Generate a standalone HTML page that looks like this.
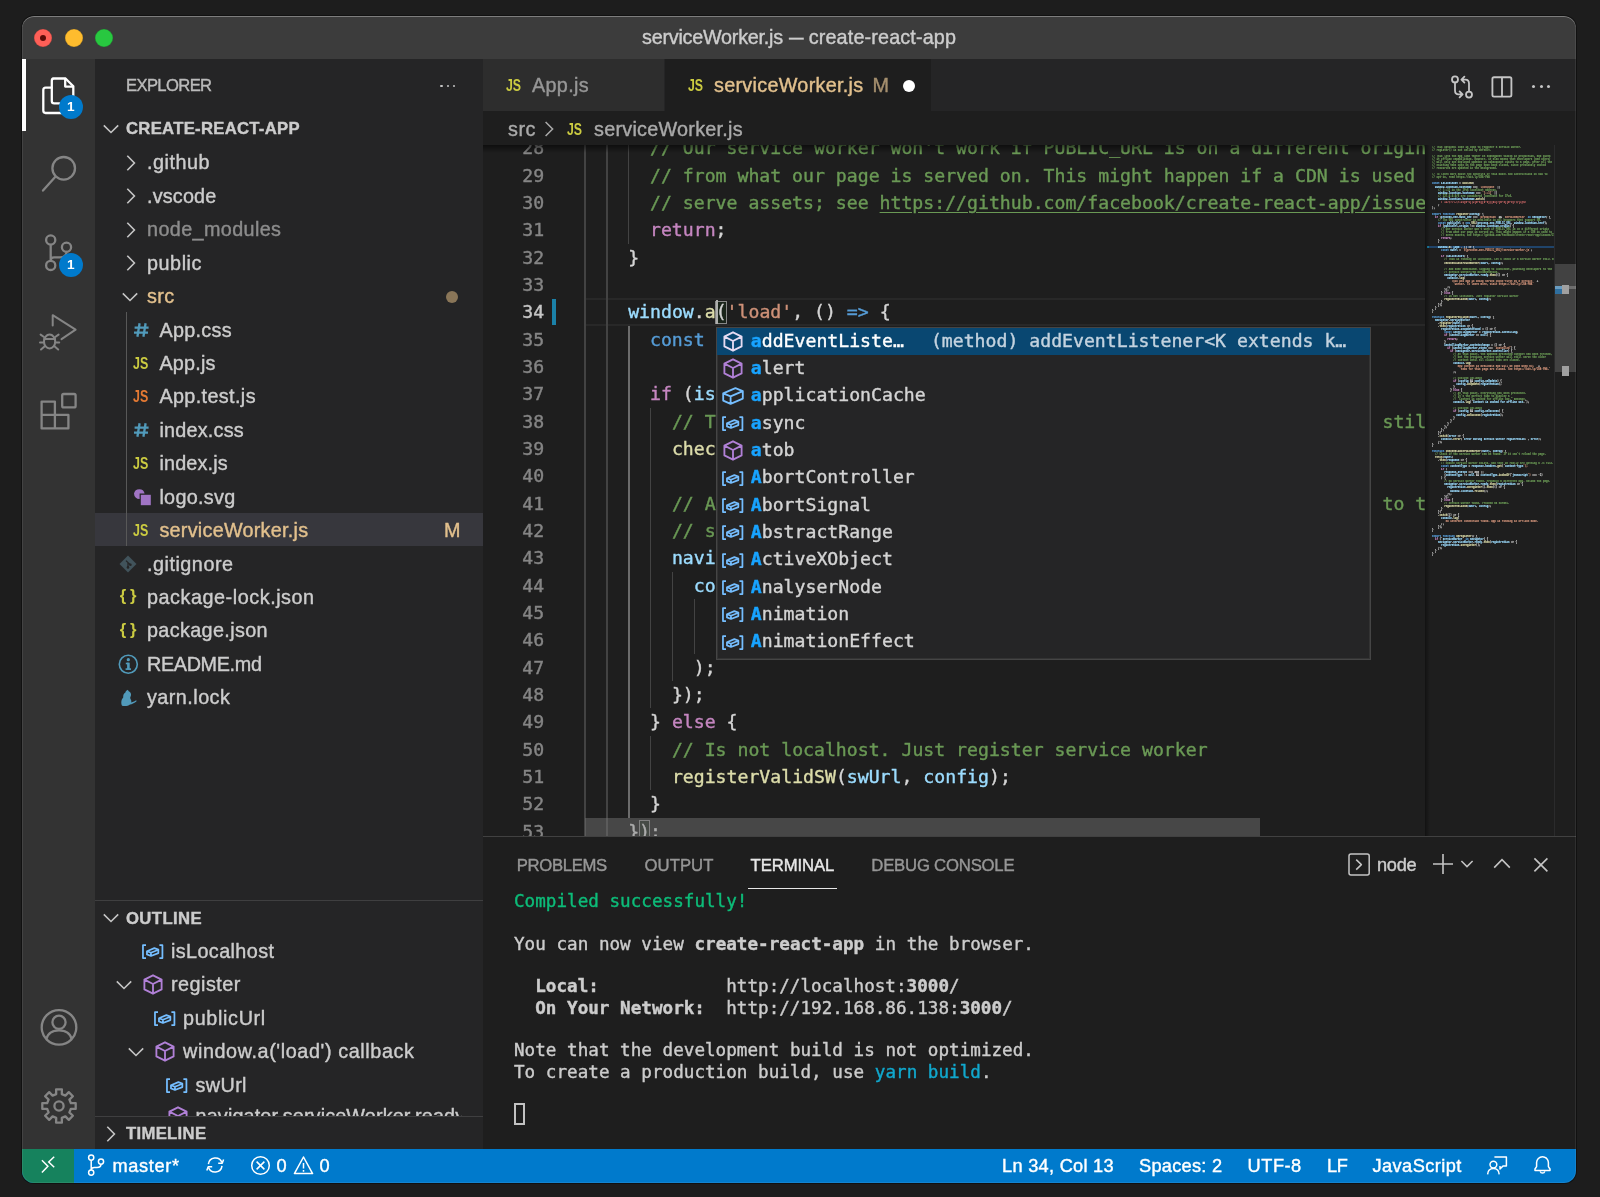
<!DOCTYPE html>
<html lang="en"><head><meta charset="utf-8"><title>serviceWorker.js — create-react-app</title>
<style>
html,body{margin:0;padding:0}
body{width:1600px;height:1197px;background:#1d1d1d;overflow:hidden;position:relative;font-family:"Liberation Sans",Arial,sans-serif;}
.win{position:absolute;left:22px;top:16px;width:1554px;height:1167px;border-radius:12px;overflow:hidden;will-change:transform;background:#1e1e1e;box-shadow:0 0 0 1px rgba(0,0,0,.4);}
.win:after{content:"";position:absolute;left:0;top:0;right:0;bottom:0;border-radius:12px;box-shadow:inset 0 1px 0 rgba(255,255,255,.28),inset 0 0 0 1px rgba(255,255,255,.08);pointer-events:none}
.t{position:absolute;white-space:pre;-webkit-text-stroke:0.4px currentColor;}
.r{position:absolute;}
.clip{position:absolute;overflow:hidden;}
svg{overflow:visible}
.c{color:#6a9955}.k{color:#c586c0}.b{color:#569cd6}.v{color:#9cdcfe}.f{color:#dcdcaa}.s{color:#ce9178}.p{color:#d4d4d4}
.u{text-decoration:underline;text-underline-offset:3px}
.mm{position:absolute;transform-origin:0 0;white-space:pre;font-family:"DejaVu Sans Mono","Liberation Mono",monospace;color:#d4d4d4;font-weight:700;-webkit-text-stroke:0.9px currentColor}
.mm div{position:absolute;left:0}.mm i{font-style:normal}.mm .x{color:#d16969}
.code{position:absolute;white-space:pre;-webkit-text-stroke:0.4px currentColor;font-family:"DejaVu Sans Mono","Liberation Mono",monospace;}
</style></head>
<body>
<div class="win">
<div class="r" style="left:0.0px;top:0.0px;width:1554.0px;height:42.7px;background:#3c3c3c;"></div>
<div class="r" style="left:0.0px;top:42.7px;width:73.0px;height:1090.3px;background:#333333;"></div>
<div class="r" style="left:73.0px;top:42.7px;width:388.0px;height:1090.3px;background:#252526;"></div>
<div class="r" style="left:461.0px;top:42.7px;width:1093.0px;height:52.8px;background:#252526;"></div>
<div class="r" style="left:461.0px;top:95.5px;width:1093.0px;height:1037.5px;background:#1e1e1e;"></div>
<div class="r" style="left:12.0px;top:12.5px;width:18.0px;height:18.0px;background:#fe5f57;border-radius:50%;box-shadow:inset 0 0 0 0.6px rgba(0,0,0,.18);"></div>
<div class="r" style="left:42.5px;top:12.5px;width:18.0px;height:18.0px;background:#febc2e;border-radius:50%;box-shadow:inset 0 0 0 0.6px rgba(0,0,0,.18);"></div>
<div class="r" style="left:73.0px;top:12.5px;width:18.0px;height:18.0px;background:#28c840;border-radius:50%;box-shadow:inset 0 0 0 0.6px rgba(0,0,0,.18);"></div>
<div class="r" style="left:18.0px;top:18.5px;width:6.0px;height:6.0px;background:#5a0c08;border-radius:50%;"></div>
<span class="t" style="left:620.0px;top:8.2px;font-size:19.80px;line-height:26px;color:#cccccc;letter-spacing:-0.242px;">serviceWorker.js</span>
<span class="t" style="left:766.6px;top:8.2px;font-size:19.80px;line-height:26px;color:#cccccc;transform:scaleX(.74);transform-origin:0 50%;">—</span>
<span class="t" style="left:786.7px;top:8.2px;font-size:19.80px;line-height:26px;color:#cccccc;letter-spacing:0.145px;">create-react-app</span>
<div class="r" style="left:0.0px;top:42.7px;width:4.1px;height:72.8px;background:#ffffff;"></div>
<svg class="r" style="left:14.0px;top:54.0px;" width="46.0" height="50.0" viewBox="0 0 46 50"><g fill="none" stroke="#ffffff" stroke-width="2.3" stroke-linejoin="round" stroke-linecap="round"><path d="M17 8.5 H29.5 L37.3 16.3 V31 Q37.3 33.4 35 33.4 H18.2 Q15.8 33.4 15.8 31 V10.7 Q15.8 8.5 18 8.5 Z"/><path d="M29.2 8.8 V16.6 H37"/><path d="M15.6 17.6 H9.6 Q7.3 17.6 7.3 20 V40.6 Q7.3 43 9.6 43 H26 Q28.3 43 28.3 40.6 V33.6"/></g></svg>
<svg class="r" style="left:14.0px;top:134.0px;" width="46.0" height="50.0" viewBox="0 0 46 50"><g fill="none" stroke="#858585" stroke-width="2.3" stroke-linecap="round"><circle cx="27.7" cy="18.3" r="11.3"/><path d="M19.6 26.6 L7 40.6"/></g></svg>
<svg class="r" style="left:14.0px;top:212.0px;" width="46.0" height="50.0" viewBox="0 0 46 50"><g fill="none" stroke="#858585" stroke-width="2.3" stroke-linecap="round"><circle cx="14.7" cy="12" r="4.6"/><circle cx="30.5" cy="19.2" r="4.6"/><circle cx="14.7" cy="37.4" r="4.6"/><path d="M14.7 16.8 V32.6 M30.5 24 Q30.5 29.3 24 29.3 H18 Q14.7 29.3 14.7 32.6"/></g></svg>
<svg class="r" style="left:14.0px;top:290.0px;" width="46.0" height="50.0" viewBox="0 0 46 50"><g fill="none" stroke="#858585" stroke-width="2.0" stroke-linecap="round" stroke-linejoin="round"><path d="M16.7 19.5 V9.2 L39.6 23.7 L25.5 33.2"/><ellipse cx="13.6" cy="35.5" rx="5.6" ry="7"/><path d="M8.3 33 H19 M8 31 L4.6 28.6 M19.2 31 L22.6 28.6 M8 36.5 H4 M19.2 36.5 H23.2 M8.5 40.5 L5 43.5 M18.7 40.5 L22.2 43.5"/></g></svg>
<svg class="r" style="left:14.0px;top:370.0px;" width="46.0" height="50.0" viewBox="0 0 46 50"><g fill="none" stroke="#858585" stroke-width="2.3" stroke-linejoin="round"><path d="M5.6 15.6 H18.9 V28.9 H32.4 V42.4 H5.6 Z M5.6 28.9 H18.9 V42.4"/><rect x="26.2" y="8" width="13.4" height="13.4" rx="1.5"/></g></svg>
<svg class="r" style="left:14.0px;top:988.0px;" width="46.0" height="48.0" viewBox="0 0 46 48"><g fill="none" stroke="#858585" stroke-width="2.3"><circle cx="23" cy="23.4" r="17.3"/><circle cx="23" cy="18.3" r="6.6"/><path d="M10.3 35.2 Q12.5 26.3 23 26.3 Q33.5 26.3 35.7 35.2"/></g></svg>
<svg class="r" style="left:14.0px;top:1066.0px;" width="46.0" height="48.0" viewBox="0 0 46 48"><g fill="none" stroke="#858585" stroke-width="2.3" stroke-linejoin="round"><path d="M20.1 7.3 L25.9 7.3 L25.8 12.1 L29.4 13.6 L32.8 10.1 L36.9 14.2 L33.4 17.6 L34.9 21.2 L39.7 21.1 L39.7 26.9 L34.9 26.8 L33.4 30.4 L36.9 33.8 L32.8 37.9 L29.4 34.4 L25.8 35.9 L25.9 40.7 L20.1 40.7 L20.2 35.9 L16.6 34.4 L13.2 37.9 L9.1 33.8 L12.6 30.4 L11.1 26.8 L6.3 26.9 L6.3 21.1 L11.1 21.2 L12.6 17.6 L9.1 14.2 L13.2 10.1 L16.6 13.6 L20.2 12.1 Z"/><circle cx="23" cy="24" r="4.6"/></g></svg>
<div class="r" style="left:36.8px;top:79.2px;width:24.0px;height:24.0px;background:#007acc;border-radius:50%;"></div>
<span class="t" style="left:45.0px;top:82.3px;font-size:13.60px;line-height:18px;color:#ffffff;font-weight:700;-webkit-text-stroke:0;">1</span>
<div class="r" style="left:36.9px;top:237.2px;width:24.0px;height:24.0px;background:#007acc;border-radius:50%;"></div>
<span class="t" style="left:45.1px;top:240.3px;font-size:13.60px;line-height:18px;color:#ffffff;font-weight:700;-webkit-text-stroke:0;">1</span>
<span class="t" style="left:104.0px;top:59.0px;font-size:16.60px;line-height:22px;color:#bbbbbb;letter-spacing:-0.614px;">EXPLORER</span>
<div class="r" style="left:418.2px;top:68.6px;width:2.7px;height:2.7px;background:#c5c5c5;border-radius:50%;"></div>
<div class="r" style="left:424.5px;top:68.6px;width:2.7px;height:2.7px;background:#c5c5c5;border-radius:50%;"></div>
<div class="r" style="left:430.8px;top:68.6px;width:2.7px;height:2.7px;background:#c5c5c5;border-radius:50%;"></div>
<svg class="r" style="left:80.5px;top:104.5px;" width="16.0" height="16.0" viewBox="0 0 16 16"><path d="M0.8 4.4 L8 11.5 L15.2 4.4" fill="none" stroke="#c5c5c5" stroke-width="1.6"/></svg>
<span class="t" style="left:104.0px;top:101.7px;font-size:16.70px;line-height:22px;color:#cccccc;font-weight:700;letter-spacing:0.282px;">CREATE-REACT-APP</span>
<div class="r" style="left:73.0px;top:496.7px;width:388.0px;height:33.4px;background:#37373d;"></div>
<div class="r" style="left:104.0px;top:296.2px;width:1.3px;height:233.9px;background:#585858;"></div>
<svg class="r" style="left:100.5px;top:138.8px;" width="16.0" height="16.0" viewBox="0 0 16 16"><path d="M4.3 0.8 L11.4 8 L4.3 15.2" fill="none" stroke="#c5c5c5" stroke-width="1.6"/></svg>
<span class="t" style="left:125.0px;top:133.3px;font-size:19.80px;line-height:26px;color:#cccccc;letter-spacing:0.507px;">.github</span>
<svg class="r" style="left:100.5px;top:172.2px;" width="16.0" height="16.0" viewBox="0 0 16 16"><path d="M4.3 0.8 L11.4 8 L4.3 15.2" fill="none" stroke="#c5c5c5" stroke-width="1.6"/></svg>
<span class="t" style="left:125.0px;top:166.7px;font-size:19.80px;line-height:26px;color:#cccccc;letter-spacing:0.180px;">.vscode</span>
<svg class="r" style="left:100.5px;top:205.7px;" width="16.0" height="16.0" viewBox="0 0 16 16"><path d="M4.3 0.8 L11.4 8 L4.3 15.2" fill="none" stroke="#c5c5c5" stroke-width="1.6"/></svg>
<span class="t" style="left:125.0px;top:200.2px;font-size:19.80px;line-height:26px;color:#8c8c8c;letter-spacing:0.383px;">node_modules</span>
<svg class="r" style="left:100.5px;top:239.1px;" width="16.0" height="16.0" viewBox="0 0 16 16"><path d="M4.3 0.8 L11.4 8 L4.3 15.2" fill="none" stroke="#c5c5c5" stroke-width="1.6"/></svg>
<span class="t" style="left:125.0px;top:233.6px;font-size:19.80px;line-height:26px;color:#cccccc;letter-spacing:0.544px;">public</span>
<svg class="r" style="left:100.0px;top:272.5px;" width="16.0" height="16.0" viewBox="0 0 16 16"><path d="M0.8 4.4 L8 11.5 L15.2 4.4" fill="none" stroke="#c5c5c5" stroke-width="1.6"/></svg>
<span class="t" style="left:125.0px;top:267.0px;font-size:19.80px;line-height:26px;color:#e2c08d;letter-spacing:0.435px;">src</span>
<div class="r" style="left:423.5px;top:274.5px;width:12.0px;height:12.0px;background:#8a7658;border-radius:50%;"></div>
<svg class="r" style="left:110.6px;top:305.0px;" width="17.0" height="18.0" viewBox="0 0 17 18"><path d="M6.6 2.2 L4.4 15.8 M12.6 2.2 L10.4 15.8 M1.6 6.6 H15.6 M1 11.6 H15" fill="none" stroke="#519aba" stroke-width="2.3"/></svg>
<span class="t" style="left:137.4px;top:300.5px;font-size:19.80px;line-height:26px;color:#cccccc;letter-spacing:0.295px;">App.css</span>
<span class="t" style="left:110.6px;top:336.7px;font-size:16.40px;line-height:21px;color:#cbcb41;font-weight:700;transform:scaleX(.76);transform-origin:0 50%;-webkit-text-stroke:0;">JS</span>
<span class="t" style="left:137.4px;top:333.9px;font-size:19.80px;line-height:26px;color:#cccccc;letter-spacing:0.228px;">App.js</span>
<span class="t" style="left:110.6px;top:370.1px;font-size:16.40px;line-height:21px;color:#e37933;font-weight:700;transform:scaleX(.76);transform-origin:0 50%;-webkit-text-stroke:0;">JS</span>
<span class="t" style="left:137.4px;top:367.3px;font-size:19.80px;line-height:26px;color:#cccccc;letter-spacing:0.378px;">App.test.js</span>
<svg class="r" style="left:110.6px;top:405.2px;" width="17.0" height="18.0" viewBox="0 0 17 18"><path d="M6.6 2.2 L4.4 15.8 M12.6 2.2 L10.4 15.8 M1.6 6.6 H15.6 M1 11.6 H15" fill="none" stroke="#519aba" stroke-width="2.3"/></svg>
<span class="t" style="left:137.4px;top:400.7px;font-size:19.80px;line-height:26px;color:#cccccc;letter-spacing:0.229px;">index.css</span>
<span class="t" style="left:110.6px;top:437.0px;font-size:16.40px;line-height:21px;color:#cbcb41;font-weight:700;transform:scaleX(.76);transform-origin:0 50%;-webkit-text-stroke:0;">JS</span>
<span class="t" style="left:137.4px;top:434.2px;font-size:19.80px;line-height:26px;color:#cccccc;letter-spacing:0.183px;">index.js</span>
<svg class="r" style="left:110.6px;top:471.1px;" width="18.0" height="20.0" viewBox="0 0 18 20"><path d="M1 6.6 A5.4 5.4 0 0 1 11.6 6.6 H6.6 V12 A5.4 5.4 0 0 1 1 6.6 Z" fill="#a074c4"/><rect x="7.8" y="7.8" width="10" height="10.4" fill="#a074c4"/></svg>
<span class="t" style="left:137.4px;top:467.6px;font-size:19.80px;line-height:26px;color:#cccccc;letter-spacing:0.306px;">logo.svg</span>
<span class="t" style="left:110.6px;top:503.8px;font-size:16.40px;line-height:21px;color:#cbcb41;font-weight:700;transform:scaleX(.76);transform-origin:0 50%;-webkit-text-stroke:0;">JS</span>
<span class="t" style="left:137.4px;top:501.0px;font-size:19.80px;line-height:26px;color:#e2c08d;letter-spacing:0.264px;">serviceWorker.js</span>
<span class="t" style="left:422.0px;top:501.0px;font-size:19.80px;line-height:26px;color:#e2c08d;letter-spacing:-1.894px;">M</span>
<svg class="r" style="left:97.0px;top:539.0px;" width="18.0" height="18.0" viewBox="0 0 18 18"><rect x="3" y="3" width="12" height="12" transform="rotate(45 9 9)" fill="#41535b"/><path d="M7 5.6 L11.2 9.8 M9 7.4 V12.6" stroke="#252526" stroke-width="1.3" fill="none"/><circle cx="9" cy="12.4" r="1.3" fill="#252526"/><circle cx="11.4" cy="9.8" r="1.3" fill="#252526"/></svg>
<span class="t" style="left:125.0px;top:534.5px;font-size:19.80px;line-height:26px;color:#cccccc;letter-spacing:0.514px;">.gitignore</span>
<span class="t" style="left:97.8px;top:569.1px;font-size:16.60px;line-height:22px;color:#cbcb41;font-weight:700;letter-spacing:-0.444px;-webkit-text-stroke:0;">{ }</span>
<span class="t" style="left:125.0px;top:567.9px;font-size:19.80px;line-height:26px;color:#cccccc;letter-spacing:0.548px;">package-lock.json</span>
<span class="t" style="left:97.8px;top:602.5px;font-size:16.60px;line-height:22px;color:#cbcb41;font-weight:700;letter-spacing:-0.444px;-webkit-text-stroke:0;">{ }</span>
<span class="t" style="left:125.0px;top:601.3px;font-size:19.80px;line-height:26px;color:#cccccc;letter-spacing:0.360px;">package.json</span>
<svg class="r" style="left:96.1px;top:638.0px;" width="20.6" height="20.6" viewBox="0 0 19 19"><circle cx="9.5" cy="9.5" r="8.3" fill="none" stroke="#519aba" stroke-width="1.5"/><rect x="8.4" y="8" width="2.4" height="6" fill="#519aba"/><rect x="7.2" y="8" width="2.6" height="1.5" fill="#519aba"/><rect x="7" y="13.2" width="5" height="1.5" fill="#519aba"/><circle cx="9.5" cy="5.2" r="1.5" fill="#519aba"/></svg>
<span class="t" style="left:125.0px;top:634.8px;font-size:19.80px;line-height:26px;color:#cccccc;letter-spacing:-0.336px;">README.md</span>
<svg class="r" style="left:97.0px;top:672.7px;" width="18.0" height="18.0" viewBox="0 0 18 18"><path d="M3 16.8 C1.6 13 2.6 10 4.2 8.4 C4 6 5 4.4 6.4 3.6 C6.6 2.2 7.8 1.2 9 0.8 C9.2 1.8 9.8 2.4 10.6 2.8 C12.2 3.8 12.4 6 11.6 7.4 C11 8.4 11.2 9.4 11.8 10.4 C12.6 11.8 12.4 12.8 12 13.4 C14.4 13 15.8 12 17 11.2 C17.8 11.4 17.6 12.4 17 12.8 C15 14.4 13 15.2 11 15.6 C9 17.2 6 17.4 3 16.8 Z" fill="#519aba"/></svg>
<span class="t" style="left:125.0px;top:668.2px;font-size:19.80px;line-height:26px;color:#cccccc;letter-spacing:0.463px;">yarn.lock</span>
<div class="r" style="left:73.0px;top:884.0px;width:388.0px;height:1.3px;background:#3f3f40;"></div>
<svg class="r" style="left:80.5px;top:894.4px;" width="16.0" height="16.0" viewBox="0 0 16 16"><path d="M0.8 4.4 L8 11.5 L15.2 4.4" fill="none" stroke="#c5c5c5" stroke-width="1.6"/></svg>
<span class="t" style="left:104.0px;top:892.4px;font-size:16.70px;line-height:22px;color:#cccccc;font-weight:700;letter-spacing:0.387px;">OUTLINE</span>
<svg class="r" style="left:119.9px;top:927.9px;" width="21.4" height="15.2" viewBox="0 0 22.5 16"><g fill="none" stroke="#75beff" stroke-width="1.85" stroke-linejoin="round"><path d="M4.2 1.2 H1 V14.8 H4.2 M18.3 1.2 H21.5 V14.8 H18.3"/><path d="M5.2 7.6 L13 4.4 L17.2 6 V9.6 L9.4 12.6 L5.2 11 Z M5.2 7.6 L9.4 9.2 L17.2 6 M9.4 9.2 V12.6"/></g></svg>
<span class="t" style="left:149.0px;top:921.8px;font-size:19.80px;line-height:26px;color:#cccccc;letter-spacing:0.395px;">isLocalhost</span>
<svg class="r" style="left:93.5px;top:960.7px;" width="16.0" height="16.0" viewBox="0 0 16 16"><path d="M0.8 4.4 L8 11.5 L15.2 4.4" fill="none" stroke="#c5c5c5" stroke-width="1.6"/></svg>
<svg class="r" style="left:121.0px;top:958.2px;" width="20.0" height="21.0" viewBox="0 0 20 21"><g fill="none" stroke="#b180d7" stroke-width="1.85" stroke-linejoin="round"><path d="M10 1.3 L18.6 5.6 V15.4 L10 19.7 L1.4 15.4 V5.6 Z M1.4 5.6 L10 10 L18.6 5.6 M10 10 V19.7"/></g></svg>
<span class="t" style="left:149.0px;top:955.2px;font-size:19.80px;line-height:26px;color:#cccccc;letter-spacing:0.497px;">register</span>
<svg class="r" style="left:132.1px;top:994.8px;" width="21.4" height="15.2" viewBox="0 0 22.5 16"><g fill="none" stroke="#75beff" stroke-width="1.85" stroke-linejoin="round"><path d="M4.2 1.2 H1 V14.8 H4.2 M18.3 1.2 H21.5 V14.8 H18.3"/><path d="M5.2 7.6 L13 4.4 L17.2 6 V9.6 L9.4 12.6 L5.2 11 Z M5.2 7.6 L9.4 9.2 L17.2 6 M9.4 9.2 V12.6"/></g></svg>
<span class="t" style="left:161.0px;top:988.7px;font-size:19.80px;line-height:26px;color:#cccccc;letter-spacing:0.664px;">publicUrl</span>
<svg class="r" style="left:106.0px;top:1027.6px;" width="16.0" height="16.0" viewBox="0 0 16 16"><path d="M0.8 4.4 L8 11.5 L15.2 4.4" fill="none" stroke="#c5c5c5" stroke-width="1.6"/></svg>
<svg class="r" style="left:133.3px;top:1025.1px;" width="20.0" height="21.0" viewBox="0 0 20 21"><g fill="none" stroke="#b180d7" stroke-width="1.85" stroke-linejoin="round"><path d="M10 1.3 L18.6 5.6 V15.4 L10 19.7 L1.4 15.4 V5.6 Z M1.4 5.6 L10 10 L18.6 5.6 M10 10 V19.7"/></g></svg>
<span class="t" style="left:161.0px;top:1022.1px;font-size:19.80px;line-height:26px;color:#cccccc;letter-spacing:0.601px;">window.a(&#x27;load&#x27;) callback</span>
<svg class="r" style="left:143.9px;top:1061.6px;" width="21.4" height="15.2" viewBox="0 0 22.5 16"><g fill="none" stroke="#75beff" stroke-width="1.85" stroke-linejoin="round"><path d="M4.2 1.2 H1 V14.8 H4.2 M18.3 1.2 H21.5 V14.8 H18.3"/><path d="M5.2 7.6 L13 4.4 L17.2 6 V9.6 L9.4 12.6 L5.2 11 Z M5.2 7.6 L9.4 9.2 L17.2 6 M9.4 9.2 V12.6"/></g></svg>
<span class="t" style="left:173.6px;top:1055.5px;font-size:19.80px;line-height:26px;color:#cccccc;letter-spacing:0.362px;">swUrl</span>
<div class="clip" style="left:73px;top:1084px;width:367px;height:15.6px">
<svg class="r" style="left:72.5px;top:6.0px;" width="20.0" height="21.0" viewBox="0 0 20 21"><g fill="none" stroke="#b180d7" stroke-width="1.85" stroke-linejoin="round"><path d="M10 1.3 L18.6 5.6 V15.4 L10 19.7 L1.4 15.4 V5.6 Z M1.4 5.6 L10 10 L18.6 5.6 M10 10 V19.7"/></g></svg>
<span class="t" style="left:100.6px;top:3.0px;font-size:19.80px;line-height:26px;color:#cccccc;letter-spacing:0.135px;">navigator.serviceWorker.ready.then() callback</span>
</div>
<div class="r" style="left:73.0px;top:1099.6px;width:388.0px;height:1.3px;background:#3f3f40;"></div>
<svg class="r" style="left:80.5px;top:1109.5px;" width="16.0" height="16.0" viewBox="0 0 16 16"><path d="M4.3 0.8 L11.4 8 L4.3 15.2" fill="none" stroke="#c5c5c5" stroke-width="1.6"/></svg>
<span class="t" style="left:104.0px;top:1107.4px;font-size:16.70px;line-height:22px;color:#cccccc;font-weight:700;letter-spacing:0.308px;">TIMELINE</span>
<div class="r" style="left:461.0px;top:42.7px;width:182.0px;height:52.8px;background:#2d2d2d;"></div>
<div class="r" style="left:643.0px;top:42.7px;width:266.0px;height:52.8px;background:#1e1e1e;"></div>
<div class="r" style="left:642.0px;top:42.7px;width:1.0px;height:52.8px;background:#252526;"></div>
<span class="t" style="left:484.0px;top:58.8px;font-size:15.80px;line-height:21px;color:#cbcb41;font-weight:700;transform:scaleX(.78);transform-origin:0 50%;-webkit-text-stroke:0;">JS</span>
<span class="t" style="left:510.0px;top:55.5px;font-size:19.80px;line-height:26px;color:#969696;letter-spacing:0.328px;">App.js</span>
<span class="t" style="left:666.0px;top:58.8px;font-size:15.80px;line-height:21px;color:#cbcb41;font-weight:700;transform:scaleX(.78);transform-origin:0 50%;-webkit-text-stroke:0;">JS</span>
<span class="t" style="left:692.0px;top:55.5px;font-size:19.80px;line-height:26px;color:#e2c08d;letter-spacing:0.296px;">serviceWorker.js</span>
<span class="t" style="left:850.4px;top:55.5px;font-size:19.80px;line-height:26px;color:#a58f6e;letter-spacing:-1.894px;">M</span>
<div class="r" style="left:880.8px;top:63.5px;width:12.0px;height:12.0px;background:#ffffff;border-radius:50%;"></div>
<svg class="r" style="left:1427.0px;top:56.7px;" width="26.0" height="28.0" viewBox="0 0 26 28"><g fill="none" stroke="#c5c5c5" stroke-width="1.8" stroke-linecap="round" stroke-linejoin="round"><circle cx="6" cy="6.4" r="3"/><circle cx="20" cy="21.6" r="3"/><path d="M6 9.6 V17.6 Q6 21.4 9.6 21.4 H13.4 M10.6 18.4 L13.6 21.4 L10.6 24.4"/><path d="M20 18.4 V10.4 Q20 6.6 16.4 6.6 H12.6 M15.4 3.6 L12.4 6.6 L15.4 9.6"/></g></svg>
<svg class="r" style="left:1469.0px;top:58.7px;" width="22.0" height="24.0" viewBox="0 0 22 24"><g fill="none" stroke="#c5c5c5" stroke-width="1.85"><rect x="1.4" y="2.2" width="19" height="19.4" rx="1.6"/><path d="M11 2.2 V21.6"/></g></svg>
<div class="r" style="left:1510.4px;top:69.0px;width:3.1px;height:3.1px;background:#c5c5c5;border-radius:50%;"></div>
<div class="r" style="left:1517.8px;top:69.0px;width:3.1px;height:3.1px;background:#c5c5c5;border-radius:50%;"></div>
<div class="r" style="left:1525.2px;top:69.0px;width:3.1px;height:3.1px;background:#c5c5c5;border-radius:50%;"></div>
<span class="t" style="left:486.0px;top:99.5px;font-size:19.80px;line-height:26px;color:#a9a9a9;letter-spacing:0.535px;">src</span>
<svg class="r" style="left:519.0px;top:104.0px;" width="16.0" height="18.0" viewBox="0 0 16 18"><path d="M4.6 2 L11.6 9 L4.6 16" fill="none" stroke="#a9a9a9" stroke-width="1.55"/></svg>
<span class="t" style="left:545.0px;top:102.6px;font-size:15.80px;line-height:21px;color:#cbcb41;font-weight:700;transform:scaleX(.78);transform-origin:0 50%;-webkit-text-stroke:0;">JS</span>
<span class="t" style="left:572.0px;top:99.5px;font-size:19.80px;line-height:26px;color:#a9a9a9;letter-spacing:0.258px;">serviceWorker.js</span>
<div class="clip" style="left:461px;top:129px;width:942px;height:691px">
<div class="r" style="left:102.0px;top:153.3px;width:840.0px;height:2.0px;background:#282828;"></div>
<div class="r" style="left:102.0px;top:178.6px;width:840.0px;height:2.0px;background:#282828;"></div>
<div class="r" style="left:101.4px;top:-10.7px;width:1.3px;height:710.7px;background:#434343;"></div>
<div class="r" style="left:123.3px;top:-10.7px;width:1.3px;height:710.7px;background:#434343;"></div>
<div class="r" style="left:145.2px;top:-10.7px;width:1.3px;height:109.3px;background:#434343;"></div>
<div class="r" style="left:145.2px;top:180.6px;width:2.0px;height:492.0px;background:#6c6c6c;"></div>
<div class="r" style="left:167.0px;top:262.6px;width:1.3px;height:300.7px;background:#434343;"></div>
<div class="r" style="left:167.0px;top:590.6px;width:1.3px;height:54.7px;background:#434343;"></div>
<div class="r" style="left:188.9px;top:426.6px;width:1.3px;height:109.3px;background:#434343;"></div>
<div class="r" style="left:210.8px;top:454.0px;width:1.3px;height:54.7px;background:#434343;"></div>
<div class="r" style="left:69.0px;top:153.8px;width:4.4px;height:26.3px;background:#1b81a8;"></div>
<div class="r" style="left:232.2px;top:155.8px;width:11.9px;height:23.3px;border:1.3px solid #888;background:rgba(0,100,0,.1);box-sizing:border-box"></div>
<div class="r" style="left:155.6px;top:675.1px;width:11.9px;height:23.3px;border:1.3px solid #888;background:rgba(0,100,0,.1);box-sizing:border-box"></div>
<span class="code" style="left:39.3px;top:-10.7px;font-size:18.17px;line-height:27.33px;letter-spacing:0.001px;color:#858585">28</span>
<span class="code" style="left:167.0px;top:-10.7px;font-size:18.17px;line-height:27.33px;letter-spacing:0.001px"><span class="c">// Our service worker won&#x27;t work if PUBLIC_URL is on a different origin</span></span>
<span class="code" style="left:39.3px;top:16.6px;font-size:18.17px;line-height:27.33px;letter-spacing:0.001px;color:#858585">29</span>
<span class="code" style="left:167.0px;top:16.6px;font-size:18.17px;line-height:27.33px;letter-spacing:0.001px"><span class="c">// from what our page is served on. This might happen if a CDN is used to</span></span>
<span class="code" style="left:39.3px;top:44.0px;font-size:18.17px;line-height:27.33px;letter-spacing:0.001px;color:#858585">30</span>
<span class="code" style="left:167.0px;top:44.0px;font-size:18.17px;line-height:27.33px;letter-spacing:0.001px"><span class="c">// serve assets; see </span><span class="c u">https://github.com/facebook/create-react-app/issues/2374</span></span>
<span class="code" style="left:39.3px;top:71.3px;font-size:18.17px;line-height:27.33px;letter-spacing:0.001px;color:#858585">31</span>
<span class="code" style="left:167.0px;top:71.3px;font-size:18.17px;line-height:27.33px;letter-spacing:0.001px"><span class="k">return</span><span class="p">;</span></span>
<span class="code" style="left:39.3px;top:98.6px;font-size:18.17px;line-height:27.33px;letter-spacing:0.001px;color:#858585">32</span>
<span class="code" style="left:145.2px;top:98.6px;font-size:18.17px;line-height:27.33px;letter-spacing:0.001px"><span class="p">}</span></span>
<span class="code" style="left:39.3px;top:126.0px;font-size:18.17px;line-height:27.33px;letter-spacing:0.001px;color:#858585">33</span>
<span class="code" style="left:39.3px;top:153.3px;font-size:18.17px;line-height:27.33px;letter-spacing:0.001px;color:#c6c6c6">34</span>
<span class="code" style="left:145.2px;top:153.3px;font-size:18.17px;line-height:27.33px;letter-spacing:0.001px"><span class="v">window</span><span class="p">.</span><span class="f">a</span><span class="p">(</span><span class="s">&#x27;load&#x27;</span><span class="p">, () </span><span class="b">=&gt;</span><span class="p"> {</span></span>
<span class="code" style="left:39.3px;top:180.6px;font-size:18.17px;line-height:27.33px;letter-spacing:0.001px;color:#858585">35</span>
<span class="code" style="left:167.0px;top:180.6px;font-size:18.17px;line-height:27.33px;letter-spacing:0.001px"><span class="b">const</span><span class="p"> </span><span class="v">swUrl</span><span class="p"> = </span><span class="s">`</span><span class="b">${</span><span class="v">process</span><span class="p">.</span><span class="v">env</span><span class="p">.</span><span class="v">PUBLIC_URL</span><span class="b">}</span><span class="s">/service-worker.js`</span><span class="p">;</span></span>
<span class="code" style="left:39.3px;top:208.0px;font-size:18.17px;line-height:27.33px;letter-spacing:0.001px;color:#858585">36</span>
<span class="code" style="left:39.3px;top:235.3px;font-size:18.17px;line-height:27.33px;letter-spacing:0.001px;color:#858585">37</span>
<span class="code" style="left:167.0px;top:235.3px;font-size:18.17px;line-height:27.33px;letter-spacing:0.001px"><span class="k">if</span><span class="p"> (</span><span class="v">isLocalhost</span><span class="p">) {</span></span>
<span class="code" style="left:39.3px;top:262.6px;font-size:18.17px;line-height:27.33px;letter-spacing:0.001px;color:#858585">38</span>
<span class="code" style="left:188.9px;top:262.6px;font-size:18.17px;line-height:27.33px;letter-spacing:0.001px"><span class="c">// This is running on localhost. Let&#x27;s check if a service worker still exists or not.</span></span>
<span class="code" style="left:39.3px;top:290.0px;font-size:18.17px;line-height:27.33px;letter-spacing:0.001px;color:#858585">39</span>
<span class="code" style="left:188.9px;top:290.0px;font-size:18.17px;line-height:27.33px;letter-spacing:0.001px"><span class="f">checkValidServiceWorker</span><span class="p">(</span><span class="v">swUrl</span><span class="p">, </span><span class="v">config</span><span class="p">);</span></span>
<span class="code" style="left:39.3px;top:317.3px;font-size:18.17px;line-height:27.33px;letter-spacing:0.001px;color:#858585">40</span>
<span class="code" style="left:39.3px;top:344.6px;font-size:18.17px;line-height:27.33px;letter-spacing:0.001px;color:#858585">41</span>
<span class="code" style="left:188.9px;top:344.6px;font-size:18.17px;line-height:27.33px;letter-spacing:0.001px"><span class="c">// Add some additional logging to localhost, pointing developers to the</span></span>
<span class="code" style="left:39.3px;top:372.0px;font-size:18.17px;line-height:27.33px;letter-spacing:0.001px;color:#858585">42</span>
<span class="code" style="left:188.9px;top:372.0px;font-size:18.17px;line-height:27.33px;letter-spacing:0.001px"><span class="c">// service worker/PWA documentation.</span></span>
<span class="code" style="left:39.3px;top:399.3px;font-size:18.17px;line-height:27.33px;letter-spacing:0.001px;color:#858585">43</span>
<span class="code" style="left:188.9px;top:399.3px;font-size:18.17px;line-height:27.33px;letter-spacing:0.001px"><span class="v">navigator</span><span class="p">.</span><span class="v">serviceWorker</span><span class="p">.</span><span class="v">ready</span><span class="p">.</span><span class="f">then</span><span class="p">(() </span><span class="b">=&gt;</span><span class="p"> {</span></span>
<span class="code" style="left:39.3px;top:426.6px;font-size:18.17px;line-height:27.33px;letter-spacing:0.001px;color:#858585">44</span>
<span class="code" style="left:210.8px;top:426.6px;font-size:18.17px;line-height:27.33px;letter-spacing:0.001px"><span class="v">console</span><span class="p">.</span><span class="f">log</span><span class="p">(</span></span>
<span class="code" style="left:39.3px;top:454.0px;font-size:18.17px;line-height:27.33px;letter-spacing:0.001px;color:#858585">45</span>
<span class="code" style="left:232.7px;top:454.0px;font-size:18.17px;line-height:27.33px;letter-spacing:0.001px"><span class="s">&#x27;This web app is being served cache-first by a service &#x27;</span><span class="p"> +</span></span>
<span class="code" style="left:39.3px;top:481.3px;font-size:18.17px;line-height:27.33px;letter-spacing:0.001px;color:#858585">46</span>
<span class="code" style="left:254.6px;top:481.3px;font-size:18.17px;line-height:27.33px;letter-spacing:0.001px"><span class="s">&#x27;worker. To learn more, visit https://bit.ly/CRA-PWA&#x27;</span></span>
<span class="code" style="left:39.3px;top:508.6px;font-size:18.17px;line-height:27.33px;letter-spacing:0.001px;color:#858585">47</span>
<span class="code" style="left:210.8px;top:508.6px;font-size:18.17px;line-height:27.33px;letter-spacing:0.001px"><span class="p">);</span></span>
<span class="code" style="left:39.3px;top:536.0px;font-size:18.17px;line-height:27.33px;letter-spacing:0.001px;color:#858585">48</span>
<span class="code" style="left:188.9px;top:536.0px;font-size:18.17px;line-height:27.33px;letter-spacing:0.001px"><span class="p">});</span></span>
<span class="code" style="left:39.3px;top:563.3px;font-size:18.17px;line-height:27.33px;letter-spacing:0.001px;color:#858585">49</span>
<span class="code" style="left:167.0px;top:563.3px;font-size:18.17px;line-height:27.33px;letter-spacing:0.001px"><span class="p">} </span><span class="k">else</span><span class="p"> {</span></span>
<span class="code" style="left:39.3px;top:590.6px;font-size:18.17px;line-height:27.33px;letter-spacing:0.001px;color:#858585">50</span>
<span class="code" style="left:188.9px;top:590.6px;font-size:18.17px;line-height:27.33px;letter-spacing:0.001px"><span class="c">// Is not localhost. Just register service worker</span></span>
<span class="code" style="left:39.3px;top:618.0px;font-size:18.17px;line-height:27.33px;letter-spacing:0.001px;color:#858585">51</span>
<span class="code" style="left:188.9px;top:618.0px;font-size:18.17px;line-height:27.33px;letter-spacing:0.001px"><span class="f">registerValidSW</span><span class="p">(</span><span class="v">swUrl</span><span class="p">, </span><span class="v">config</span><span class="p">);</span></span>
<span class="code" style="left:39.3px;top:645.3px;font-size:18.17px;line-height:27.33px;letter-spacing:0.001px;color:#858585">52</span>
<span class="code" style="left:167.0px;top:645.3px;font-size:18.17px;line-height:27.33px;letter-spacing:0.001px"><span class="p">}</span></span>
<span class="code" style="left:39.3px;top:672.6px;font-size:18.17px;line-height:27.33px;letter-spacing:0.001px;color:#858585">53</span>
<span class="code" style="left:145.2px;top:672.6px;font-size:18.17px;line-height:27.33px;letter-spacing:0.001px"><span class="p">});</span></span>
<div class="r" style="left:102.0px;top:672.6px;width:675.0px;height:18.4px;background:rgba(121,121,121,.45);"></div>
<div class="r" style="left:0;top:0;width:942px;height:8px;background:linear-gradient(rgba(0,0,0,.55),rgba(0,0,0,0))"></div>
</div>
<div class="clip" style="left:1403.0px;top:129.0px;width:129.6px;height:691.0px">
<div class="r" style="left:1.6px;top:100.7px;width:128px;height:2.7px;background:#20446a"></div>
<div class="r" style="left:1.6px;top:100.7px;width:2.6px;height:2.7px;background:#1b81a8"></div>
<div class="mm" style="left:6.8px;top:0.0px;transform:scale(0.13894);font-size:18.17px;line-height:21.880px;letter-spacing:0.001px"><div style="top:7.20px"><i class="c">// This optional code is used to register a service worker.</i></div><div style="top:28.79px"><i class="c">// register() is not called by default.</i></div><div style="top:71.97px"><i class="c">// This lets the app load faster on subsequent visits in production, and gives</i></div><div style="top:93.57px"><i class="c">// it offline capabilities. However, it also means that developers (and users)</i></div><div style="top:115.16px"><i class="c">// will only see deployed updates on subsequent visits to a page, after all the</i></div><div style="top:136.75px"><i class="c">// existing tabs open on the page have been closed, since previously cached</i></div><div style="top:158.34px"><i class="c">// resources are updated in the background.</i></div><div style="top:201.53px"><i class="c">// To learn more about the benefits of this model and instructions on how to</i></div><div style="top:223.12px"><i class="c">// opt-in, read https://bit.ly/CRA-PWA</i></div><div style="top:266.30px"><i class="b">const</i> <i class="v">isLocalhost</i> = <i class="f">Boolean</i>(</div><div style="top:295.09px">  <i class="v">window</i>.<i class="v">location</i>.<i class="v">hostname</i> === <i class="s">&#x27;localhost&#x27;</i> ||</div><div style="top:316.68px">    <i class="c">// [::1] is the IPv6 localhost address.</i></div><div style="top:338.28px">    <i class="v">window</i>.<i class="v">location</i>.<i class="v">hostname</i> === <i class="s">&#x27;[::1]&#x27;</i> ||</div><div style="top:359.87px">    <i class="c">// 127.0.0.0/8 are considered localhost for IPv4.</i></div><div style="top:381.46px">    <i class="v">window</i>.<i class="v">location</i>.<i class="v">hostname</i>.<i class="f">match</i>(</div><div style="top:403.05px">      <i class="x">/^127(?:\.(?:25[0-5]|2[0-4][0-9]|[01]?[0-9][0-9]?)){3}$/</i></div><div style="top:424.64px">    )</div><div style="top:446.24px">);</div><div style="top:489.42px"><i class="b">export</i> <i class="b">function</i> <i class="f">register</i>(<i class="v">config</i>) {</div><div style="top:511.01px">  <i class="k">if</i> (<i class="v">process</i>.<i class="v">env</i>.<i class="v">NODE_ENV</i> === <i class="s">&#x27;production&#x27;</i> &amp;&amp; <i class="s">&#x27;serviceWorker&#x27;</i> <i class="b">in</i> <i class="v">navigator</i>) {</div><div style="top:532.61px">    <i class="c">// The URL constructor is available in all browsers that support SW.</i></div><div style="top:554.20px">    <i class="b">const</i> <i class="v">publicUrl</i> = <i class="b">new</i> <i class="f">URL</i>(<i class="v">process</i>.<i class="v">env</i>.<i class="v">PUBLIC_URL</i>, <i class="v">window</i>.<i class="v">location</i>.<i class="v">href</i>);</div><div style="top:575.79px">    <i class="k">if</i> (<i class="v">publicUrl</i>.<i class="v">origin</i> !== <i class="v">window</i>.<i class="v">location</i>.<i class="v">origin</i>) {</div><div style="top:597.38px">      <i class="c">// Our service worker won&#x27;t work if PUBLIC_URL is on a different origin</i></div><div style="top:618.97px">      <i class="c">// from what our page is served on. This might happen if a CDN is used to</i></div><div style="top:640.57px">      <i class="c">// serve assets; see https://github.com/facebook/create-react-app/issues/2374</i></div><div style="top:662.16px">      <i class="k">return</i>;</div><div style="top:683.75px">    }</div><div style="top:726.93px">    <i class="v">window</i>.<i class="f">a</i>(&#x27;<i class="v">load</i><i class="s">&#x27;,</i> () =&gt; {</div><div style="top:748.53px">      <i class="b">const</i> <i class="v">swUrl</i> = <i class="s">`${process.env.PUBLIC_URL}/service-worker.js`</i>;</div><div style="top:791.71px">      <i class="k">if</i> (<i class="v">isLocalhost</i>) {</div><div style="top:813.30px">        <i class="c">// This is running on localhost. Let&#x27;s check if a service worker still exists or not.</i></div><div style="top:842.09px">        <i class="f">checkValidServiceWorker</i>(<i class="v">swUrl</i>, <i class="v">config</i>);</div><div style="top:885.28px">        <i class="c">// Add some additional logging to localhost, pointing developers to the</i></div><div style="top:906.87px">        <i class="c">// service worker/PWA documentation.</i></div><div style="top:928.46px">        <i class="v">navigator</i>.<i class="v">serviceWorker</i>.<i class="v">ready</i>.<i class="f">then</i>(() =&gt; {</div><div style="top:950.05px">          <i class="v">console</i>.<i class="f">log</i>(</div><div style="top:971.64px">            <i class="s">&#x27;This web app is being served cache-first by a service &#x27;</i> +</div><div style="top:993.24px">              <i class="s">&#x27;worker. To learn more, visit https://bit.ly/CRA-PWA&#x27;</i></div><div style="top:1014.83px">          );</div><div style="top:1036.42px">        });</div><div style="top:1058.01px">      } <i class="k">else</i> {</div><div style="top:1079.61px">        <i class="c">// Is not localhost. Just register service worker</i></div><div style="top:1101.20px">        <i class="f">registerValidSW</i>(<i class="v">swUrl</i>, <i class="v">config</i>);</div><div style="top:1122.79px">      }</div><div style="top:1144.38px">    });</div><div style="top:1165.97px">  }</div><div style="top:1187.57px">}</div><div style="top:1230.75px"><i class="b">function</i> <i class="f">registerValidSW</i>(<i class="v">swUrl</i>, <i class="v">config</i>) {</div><div style="top:1252.34px">  <i class="v">navigator</i>.<i class="v">serviceWorker</i></div><div style="top:1273.93px">    .<i class="f">register</i>(<i class="v">swUrl</i>)</div><div style="top:1295.53px">    .<i class="f">then</i>(<i class="v">registration</i> =&gt; {</div><div style="top:1317.12px">      <i class="v">registration</i>.<i class="v">onupdatefound</i> = () =&gt; {</div><div style="top:1338.71px">        <i class="b">const</i> <i class="v">installingWorker</i> = <i class="v">registration</i>.<i class="v">installing</i>;</div><div style="top:1360.30px">        <i class="k">if</i> (<i class="v">installingWorker</i> == <i class="v">null</i>) {</div><div style="top:1389.09px">          <i class="k">return</i>;</div><div style="top:1410.68px">        }</div><div style="top:1432.28px">        <i class="v">installingWorker</i>.<i class="v">onstatechange</i> = () =&gt; {</div><div style="top:1453.87px">          <i class="k">if</i> (<i class="v">installingWorker</i>.<i class="v">state</i> === <i class="s">&#x27;installed&#x27;</i>) {</div><div style="top:1475.46px">            <i class="k">if</i> (<i class="v">navigator</i>.<i class="v">serviceWorker</i>.<i class="v">controller</i>) {</div><div style="top:1497.05px">              <i class="c">// At this point, the updated precached content has been fetched,</i></div><div style="top:1518.64px">              <i class="c">// but the previous service worker will still serve the older</i></div><div style="top:1540.24px">              <i class="c">// content until all client tabs are closed.</i></div><div style="top:1561.83px">              <i class="v">console</i>.<i class="f">log</i>(</div><div style="top:1583.42px">                <i class="s">&#x27;New content is available and will be used when all &#x27;</i> +</div><div style="top:1605.01px">                  <i class="s">&#x27;tabs for this page are closed. See https://bit.ly/CRA-PWA.&#x27;</i></div><div style="top:1626.61px">              );</div><div style="top:1669.79px">              <i class="c">// Execute callback</i></div><div style="top:1691.38px">              <i class="k">if</i> (<i class="v">config</i> &amp;&amp; <i class="v">config</i>.<i class="v">onUpdate</i>) {</div><div style="top:1712.97px">                <i class="v">config</i>.<i class="f">onUpdate</i>(<i class="v">registration</i>);</div><div style="top:1734.57px">              }</div><div style="top:1756.16px">            } <i class="k">else</i> {</div><div style="top:1777.75px">              <i class="c">// At this point, everything has been precached.</i></div><div style="top:1799.34px">              <i class="c">// It&#x27;s the perfect time to display a</i></div><div style="top:1820.93px">              <i class="c">// &quot;Content is cached for offline use.&quot; message.</i></div><div style="top:1842.53px">              <i class="v">console</i>.<i class="f">log</i>(&#x27;<i class="v">Content</i> <i class="v">is</i> <i class="v">cached</i> <i class="v">for</i> <i class="v">offline</i> <i class="v">use</i>.&#x27;);</div><div style="top:1885.71px">              <i class="c">// Execute callback</i></div><div style="top:1907.30px">              <i class="k">if</i> (<i class="v">config</i> &amp;&amp; <i class="v">config</i>.<i class="v">onSuccess</i>) {</div><div style="top:1936.09px">                <i class="v">config</i>.<i class="f">onSuccess</i>(<i class="v">registration</i>);</div><div style="top:1957.68px">              }</div><div style="top:1979.28px">            }</div><div style="top:2000.87px">          }</div><div style="top:2022.46px">        };</div><div style="top:2044.05px">      };</div><div style="top:2065.64px">    })</div><div style="top:2087.24px">    .<i class="f">catch</i>(<i class="v">error</i> =&gt; {</div><div style="top:2108.83px">      <i class="v">console</i>.<i class="f">error</i>(&#x27;<i class="v">Error</i> <i class="v">during</i> <i class="v">service</i> <i class="v">worker</i> <i class="v">registration</i>:&#x27;, <i class="v">error</i>);</div><div style="top:2130.42px">    });</div><div style="top:2152.01px">}</div><div style="top:2195.20px"><i class="b">function</i> <i class="f">checkValidServiceWorker</i>(<i class="v">swUrl</i>, <i class="v">config</i>) {</div><div style="top:2216.79px">  <i class="c">// Check if the service worker can be found. If it can&#x27;t reload the page.</i></div><div style="top:2238.38px">  <i class="f">fetch</i>(<i class="v">swUrl</i>)</div><div style="top:2259.97px">    .<i class="f">then</i>(<i class="v">response</i> =&gt; {</div><div style="top:2281.57px">      <i class="c">// Ensure service worker exists, and that we really are getting a JS file.</i></div><div style="top:2303.16px">      <i class="b">const</i> <i class="v">contentType</i> = <i class="v">response</i>.<i class="v">headers</i>.<i class="f">get</i>(&#x27;<i class="v">content</i>-<i class="v">type</i><i class="s">&#x27;);</i></div><div style="top:2324.75px">      <i class="k">if</i> (</div><div style="top:2346.34px">        <i class="v">response</i>.<i class="v">status</i> === 404 ||</div><div style="top:2367.93px">        (<i class="v">contentType</i> != <i class="v">null</i> &amp;&amp; <i class="v">contentType</i>.<i class="f">indexOf</i>(&#x27;<i class="v">javascript</i><i class="s">&#x27;)</i> === -1)</div><div style="top:2389.53px">      ) {</div><div style="top:2411.12px">        <i class="c">// No service worker found. Probably a different app. Reload the page.</i></div><div style="top:2432.71px">        <i class="v">navigator</i>.<i class="v">serviceWorker</i>.<i class="v">ready</i>.<i class="f">then</i>(<i class="v">registration</i> =&gt; {</div><div style="top:2454.30px">          <i class="v">registration</i>.<i class="f">unregister</i>().<i class="f">then</i>(() =&gt; {</div><div style="top:2483.09px">            <i class="v">window</i>.<i class="v">location</i>.<i class="f">reload</i>();</div><div style="top:2504.68px">          });</div><div style="top:2526.28px">        });</div><div style="top:2547.87px">      } <i class="k">else</i> {</div><div style="top:2569.46px">        <i class="c">// Service worker found. Proceed as normal.</i></div><div style="top:2591.05px">        <i class="f">registerValidSW</i>(<i class="v">swUrl</i>, <i class="v">config</i>);</div><div style="top:2612.64px">      }</div><div style="top:2634.24px">    })</div><div style="top:2655.83px">    .<i class="f">catch</i>(() =&gt; {</div><div style="top:2677.42px">      <i class="v">console</i>.<i class="f">log</i>(</div><div style="top:2699.01px">        <i class="s">&#x27;No internet connection found. App is running in offline mode.&#x27;</i></div><div style="top:2720.61px">      );</div><div style="top:2742.20px">    });</div><div style="top:2763.79px">}</div><div style="top:2806.97px"><i class="b">export</i> <i class="b">function</i> <i class="f">unregister</i>() {</div><div style="top:2828.57px">  <i class="k">if</i> (&#x27;<i class="v">serviceWorker</i><i class="s">&#x27;</i> <i class="b">in</i> <i class="v">navigator</i>) {</div><div style="top:2850.16px">    <i class="v">navigator</i>.<i class="v">serviceWorker</i>.<i class="v">ready</i>.<i class="f">then</i>(<i class="v">registration</i> =&gt; {</div><div style="top:2871.75px">      <i class="v">registration</i>.<i class="f">unregister</i>();</div><div style="top:2893.34px">    });</div><div style="top:2914.93px">  }</div><div style="top:2936.53px">}</div></div>
<div class="r" style="left:0;top:0;width:5px;height:691px;background:linear-gradient(90deg,rgba(0,0,0,.4),rgba(0,0,0,0))"></div>
</div>
<div class="r" style="left:1532.4px;top:129.0px;width:1.0px;height:691.0px;background:#2b2b2c;"></div>
<div class="r" style="left:1533.2px;top:247.7px;width:20.8px;height:107.9px;background:#424242;"></div>
<div class="r" style="left:1533.2px;top:269.8px;width:20.8px;height:3.2px;background:#6e6e6e;"></div>
<div class="r" style="left:1533.2px;top:269.8px;width:6.8px;height:8.4px;background:#2f6f9f;"></div>
<div class="r" style="left:1533.2px;top:269.8px;width:6.8px;height:2.8px;background:#6a9cc0;"></div>
<div class="r" style="left:1540.0px;top:269.0px;width:7.2px;height:9.2px;background:#a0a0a0;"></div>
<div class="r" style="left:1540.0px;top:350.0px;width:7.2px;height:9.6px;background:#a0a0a0;"></div>
<div class="r" style="left:694.0px;top:311.0px;width:655.0px;height:333.0px;background:#252526;border:1px solid #454545;box-shadow:inset 0 0 0 1px rgba(69,69,69,.45);box-sizing:border-box"></div>
<div class="r" style="left:695.0px;top:311.5px;width:653.0px;height:27.3px;background:#094771;"></div>
<svg class="r" style="left:700.6px;top:314.7px;" width="20.0" height="21.0" viewBox="0 0 20 21"><g fill="none" stroke="#e6dcf2" stroke-width="1.85" stroke-linejoin="round"><path d="M10 1.3 L18.6 5.6 V15.4 L10 19.7 L1.4 15.4 V5.6 Z M1.4 5.6 L10 10 L18.6 5.6 M10 10 V19.7"/></g></svg>
<span class="code" style="left:728.8px;top:310.7px;font-size:18.17px;line-height:27.33px;letter-spacing:0.001px;color:#ffffff"><span style="color:#18a3ff;font-weight:700">a</span>ddEventListe…</span>
<svg class="r" style="left:700.6px;top:342.0px;" width="20.0" height="21.0" viewBox="0 0 20 21"><g fill="none" stroke="#b180d7" stroke-width="1.85" stroke-linejoin="round"><path d="M10 1.3 L18.6 5.6 V15.4 L10 19.7 L1.4 15.4 V5.6 Z M1.4 5.6 L10 10 L18.6 5.6 M10 10 V19.7"/></g></svg>
<span class="code" style="left:728.8px;top:338.1px;font-size:18.17px;line-height:27.33px;letter-spacing:0.001px;color:#d4d4d4"><span style="color:#18a3ff;font-weight:700">a</span>lert</span>
<svg class="r" style="left:699.5px;top:370.9px;" width="22.0" height="18.0" viewBox="0 0 22 18"><g fill="none" stroke="#75beff" stroke-width="1.85" stroke-linejoin="round"><path d="M1.2 6.4 L13.4 1.2 L20.8 4.2 V11.6 L8.6 16.8 L1.2 13.6 Z M1.2 6.4 L8.6 9.4 L20.8 4.2 M8.6 9.4 V16.8"/></g></svg>
<span class="code" style="left:728.8px;top:365.4px;font-size:18.17px;line-height:27.33px;letter-spacing:0.001px;color:#d4d4d4"><span style="color:#18a3ff;font-weight:700">a</span>pplicationCache</span>
<svg class="r" style="left:699.9px;top:399.8px;" width="21.4" height="15.2" viewBox="0 0 22.5 16"><g fill="none" stroke="#75beff" stroke-width="1.85" stroke-linejoin="round"><path d="M4.2 1.2 H1 V14.8 H4.2 M18.3 1.2 H21.5 V14.8 H18.3"/><path d="M5.2 7.6 L13 4.4 L17.2 6 V9.6 L9.4 12.6 L5.2 11 Z M5.2 7.6 L9.4 9.2 L17.2 6 M9.4 9.2 V12.6"/></g></svg>
<span class="code" style="left:728.8px;top:392.7px;font-size:18.17px;line-height:27.33px;letter-spacing:0.001px;color:#d4d4d4"><span style="color:#18a3ff;font-weight:700">a</span>sync</span>
<svg class="r" style="left:700.6px;top:424.0px;" width="20.0" height="21.0" viewBox="0 0 20 21"><g fill="none" stroke="#b180d7" stroke-width="1.85" stroke-linejoin="round"><path d="M10 1.3 L18.6 5.6 V15.4 L10 19.7 L1.4 15.4 V5.6 Z M1.4 5.6 L10 10 L18.6 5.6 M10 10 V19.7"/></g></svg>
<span class="code" style="left:728.8px;top:420.1px;font-size:18.17px;line-height:27.33px;letter-spacing:0.001px;color:#d4d4d4"><span style="color:#18a3ff;font-weight:700">a</span>tob</span>
<svg class="r" style="left:699.9px;top:454.5px;" width="21.4" height="15.2" viewBox="0 0 22.5 16"><g fill="none" stroke="#75beff" stroke-width="1.85" stroke-linejoin="round"><path d="M4.2 1.2 H1 V14.8 H4.2 M18.3 1.2 H21.5 V14.8 H18.3"/><path d="M5.2 7.6 L13 4.4 L17.2 6 V9.6 L9.4 12.6 L5.2 11 Z M5.2 7.6 L9.4 9.2 L17.2 6 M9.4 9.2 V12.6"/></g></svg>
<span class="code" style="left:728.8px;top:447.4px;font-size:18.17px;line-height:27.33px;letter-spacing:0.001px;color:#d4d4d4"><span style="color:#18a3ff;font-weight:700">A</span>bortController</span>
<svg class="r" style="left:699.9px;top:481.8px;" width="21.4" height="15.2" viewBox="0 0 22.5 16"><g fill="none" stroke="#75beff" stroke-width="1.85" stroke-linejoin="round"><path d="M4.2 1.2 H1 V14.8 H4.2 M18.3 1.2 H21.5 V14.8 H18.3"/><path d="M5.2 7.6 L13 4.4 L17.2 6 V9.6 L9.4 12.6 L5.2 11 Z M5.2 7.6 L9.4 9.2 L17.2 6 M9.4 9.2 V12.6"/></g></svg>
<span class="code" style="left:728.8px;top:474.7px;font-size:18.17px;line-height:27.33px;letter-spacing:0.001px;color:#d4d4d4"><span style="color:#18a3ff;font-weight:700">A</span>bortSignal</span>
<svg class="r" style="left:699.9px;top:509.1px;" width="21.4" height="15.2" viewBox="0 0 22.5 16"><g fill="none" stroke="#75beff" stroke-width="1.85" stroke-linejoin="round"><path d="M4.2 1.2 H1 V14.8 H4.2 M18.3 1.2 H21.5 V14.8 H18.3"/><path d="M5.2 7.6 L13 4.4 L17.2 6 V9.6 L9.4 12.6 L5.2 11 Z M5.2 7.6 L9.4 9.2 L17.2 6 M9.4 9.2 V12.6"/></g></svg>
<span class="code" style="left:728.8px;top:502.1px;font-size:18.17px;line-height:27.33px;letter-spacing:0.001px;color:#d4d4d4"><span style="color:#18a3ff;font-weight:700">A</span>bstractRange</span>
<svg class="r" style="left:699.9px;top:536.5px;" width="21.4" height="15.2" viewBox="0 0 22.5 16"><g fill="none" stroke="#75beff" stroke-width="1.85" stroke-linejoin="round"><path d="M4.2 1.2 H1 V14.8 H4.2 M18.3 1.2 H21.5 V14.8 H18.3"/><path d="M5.2 7.6 L13 4.4 L17.2 6 V9.6 L9.4 12.6 L5.2 11 Z M5.2 7.6 L9.4 9.2 L17.2 6 M9.4 9.2 V12.6"/></g></svg>
<span class="code" style="left:728.8px;top:529.4px;font-size:18.17px;line-height:27.33px;letter-spacing:0.001px;color:#d4d4d4"><span style="color:#18a3ff;font-weight:700">A</span>ctiveXObject</span>
<svg class="r" style="left:699.9px;top:563.8px;" width="21.4" height="15.2" viewBox="0 0 22.5 16"><g fill="none" stroke="#75beff" stroke-width="1.85" stroke-linejoin="round"><path d="M4.2 1.2 H1 V14.8 H4.2 M18.3 1.2 H21.5 V14.8 H18.3"/><path d="M5.2 7.6 L13 4.4 L17.2 6 V9.6 L9.4 12.6 L5.2 11 Z M5.2 7.6 L9.4 9.2 L17.2 6 M9.4 9.2 V12.6"/></g></svg>
<span class="code" style="left:728.8px;top:556.7px;font-size:18.17px;line-height:27.33px;letter-spacing:0.001px;color:#d4d4d4"><span style="color:#18a3ff;font-weight:700">A</span>nalyserNode</span>
<svg class="r" style="left:699.9px;top:591.1px;" width="21.4" height="15.2" viewBox="0 0 22.5 16"><g fill="none" stroke="#75beff" stroke-width="1.85" stroke-linejoin="round"><path d="M4.2 1.2 H1 V14.8 H4.2 M18.3 1.2 H21.5 V14.8 H18.3"/><path d="M5.2 7.6 L13 4.4 L17.2 6 V9.6 L9.4 12.6 L5.2 11 Z M5.2 7.6 L9.4 9.2 L17.2 6 M9.4 9.2 V12.6"/></g></svg>
<span class="code" style="left:728.8px;top:584.1px;font-size:18.17px;line-height:27.33px;letter-spacing:0.001px;color:#d4d4d4"><span style="color:#18a3ff;font-weight:700">A</span>nimation</span>
<svg class="r" style="left:699.9px;top:618.5px;" width="21.4" height="15.2" viewBox="0 0 22.5 16"><g fill="none" stroke="#75beff" stroke-width="1.85" stroke-linejoin="round"><path d="M4.2 1.2 H1 V14.8 H4.2 M18.3 1.2 H21.5 V14.8 H18.3"/><path d="M5.2 7.6 L13 4.4 L17.2 6 V9.6 L9.4 12.6 L5.2 11 Z M5.2 7.6 L9.4 9.2 L17.2 6 M9.4 9.2 V12.6"/></g></svg>
<span class="code" style="left:728.8px;top:611.4px;font-size:18.17px;line-height:27.33px;letter-spacing:0.001px;color:#d4d4d4"><span style="color:#18a3ff;font-weight:700">A</span>nimationEffect</span>
<span class="code" style="left:908.9px;top:310.7px;font-size:18.17px;line-height:27.33px;letter-spacing:0.001px;color:#c4d3df">(method) addEventListener&lt;K extends k…</span>
<div class="r" style="left:693.6px;top:284.3px;width:2.2px;height:23.3px;background:#aeafad;"></div>
<div class="r" style="left:461.0px;top:820.0px;width:1093.0px;height:1.3px;background:#414141;"></div>
<span class="t" style="left:494.8px;top:838.7px;font-size:16.70px;line-height:22px;color:#969696;letter-spacing:-0.326px;">PROBLEMS</span>
<span class="t" style="left:622.5px;top:838.7px;font-size:16.70px;line-height:22px;color:#969696;letter-spacing:0.058px;">OUTPUT</span>
<span class="t" style="left:728.6px;top:838.7px;font-size:16.70px;line-height:22px;color:#e7e7e7;letter-spacing:-0.105px;">TERMINAL</span>
<span class="t" style="left:849.3px;top:838.7px;font-size:16.70px;line-height:22px;color:#969696;letter-spacing:-0.192px;">DEBUG CONSOLE</span>
<div class="r" style="left:725.8px;top:871.7px;width:89.2px;height:1.6px;background:#e7e7e7;"></div>
<svg class="r" style="left:1325.5px;top:837.3px;" width="23.0" height="23.0" viewBox="0 0 23 23"><g fill="none" stroke="#c5c5c5" stroke-width="1.5" stroke-linejoin="round"><rect x="1" y="1" width="20.2" height="21" rx="2"/><path d="M8.2 6.6 L13.4 11.6 L8.2 16.6"/></g></svg>
<span class="t" style="left:1355.0px;top:836.8px;font-size:18.20px;line-height:24px;color:#cccccc;letter-spacing:-0.297px;">node</span>
<svg class="r" style="left:1410.0px;top:837.3px;" width="22.0" height="22.0" viewBox="0 0 22 22"><path d="M11 1 V21 M1 11 H21" fill="none" stroke="#c5c5c5" stroke-width="1.6"/></svg>
<svg class="r" style="left:1438.0px;top:841.3px;" width="14.0" height="14.0" viewBox="0 0 14 14"><path d="M1.4 4 L7 9.6 L12.6 4" fill="none" stroke="#c5c5c5" stroke-width="1.5"/></svg>
<svg class="r" style="left:1471.0px;top:840.3px;" width="18.0" height="14.0" viewBox="0 0 18 14"><path d="M1.2 11.6 L9 3.6 L16.8 11.6" fill="none" stroke="#c5c5c5" stroke-width="1.6"/></svg>
<svg class="r" style="left:1511.0px;top:840.8px;" width="16.0" height="16.0" viewBox="0 0 16 16"><path d="M1.4 1.4 L14.4 14.4 M14.4 1.4 L1.4 14.4" fill="none" stroke="#c5c5c5" stroke-width="1.6"/></svg>
<span class="code" style="left:492.0px;top:875.1px;font-size:17.60px;line-height:21.30px;letter-spacing:0.019px;color:#cccccc"><span style="color:#0dbc79">Compiled successfully!</span></span>
<span class="code" style="left:492.0px;top:917.8px;font-size:17.60px;line-height:21.30px;letter-spacing:0.019px;color:#cccccc">You can now view <b>create-react-app</b> in the browser.</span>
<span class="code" style="left:513.2px;top:960.4px;font-size:17.60px;line-height:21.30px;letter-spacing:0.019px;color:#cccccc"><b>Local:</b>            http://localhost:<b>3000</b>/</span>
<span class="code" style="left:513.2px;top:981.6px;font-size:17.60px;line-height:21.30px;letter-spacing:0.019px;color:#cccccc"><b>On Your Network:</b>  http://192.168.86.138:<b>3000</b>/</span>
<span class="code" style="left:492.0px;top:1024.2px;font-size:17.60px;line-height:21.30px;letter-spacing:0.019px;color:#cccccc">Note that the development build is not optimized.</span>
<span class="code" style="left:492.0px;top:1045.5px;font-size:17.60px;line-height:21.30px;letter-spacing:0.019px;color:#cccccc">To create a production build, use <span style="color:#11a8cd">yarn build</span>.</span>
<div class="r" style="left:492.0px;top:1087.0px;width:11.0px;height:22.0px;border:2px solid #c2c2c2;box-sizing:border-box"></div>
<div class="r" style="left:0.0px;top:1132.7px;width:1554.0px;height:34.3px;background:#007acc;"></div>
<div class="r" style="left:0.0px;top:1132.7px;width:52.0px;height:34.3px;background:#16825d;"></div>
<svg class="r" style="left:16.0px;top:1139.4px;" width="20.0" height="20.0" viewBox="0 0 20 20"><path d="M3.9 5.3 L9.9 11.3 L3.9 17.6 M16.2 1.8 L10.7 7 L16.2 12.2" fill="none" stroke="#ffffff" stroke-width="1.5"/></svg>
<svg class="r" style="left:64.0px;top:1137.4px;" width="20.0" height="24.0" viewBox="0 0 20 24"><g fill="none" stroke="#fff" stroke-width="1.5"><circle cx="5.2" cy="4.6" r="2.6"/><circle cx="5.2" cy="19.6" r="2.6"/><circle cx="15" cy="8.6" r="2.6"/><path d="M5.2 7.2 V17 M15 11.2 Q15 14.4 11 14.4 H8.4 Q5.2 14.4 5.2 17"/></g></svg>
<span class="t" style="left:90.5px;top:1137.5px;font-size:18.20px;line-height:24px;color:#ffffff;letter-spacing:0.642px;">master*</span>
<svg class="r" style="left:182.0px;top:1138.4px;" width="22.0" height="22.0" viewBox="0 0 22 22"><g fill="none" stroke="#fff" stroke-width="1.5" stroke-linejoin="round"><path d="M4.4 10.2 A7 7 0 0 1 17.9 8.6 M18 11.8 A7 7 0 0 1 4.5 13.4"/><path d="M14.2 9.3 L18.2 9.3 L19.6 5.4 M8.2 12.7 L4.2 12.7 L2.8 16.6"/></g></svg>
<svg class="r" style="left:228.0px;top:1139.0px;" width="21.0" height="21.0" viewBox="0 0 21 21"><g fill="none" stroke="#fff" stroke-width="1.5"><circle cx="10.5" cy="10.5" r="8.8"/><path d="M6.6 6.6 L14.4 14.4 M14.4 6.6 L6.6 14.4"/></g></svg>
<span class="t" style="left:254.6px;top:1137.5px;font-size:18.20px;line-height:24px;color:#ffffff;letter-spacing:0.178px;">0</span>
<svg class="r" style="left:271.0px;top:1139.0px;" width="21.0" height="21.0" viewBox="0 0 21 21"><g fill="none" stroke="#fff" stroke-width="1.5" stroke-linejoin="round"><path d="M10.5 2 L19.6 18.6 H1.4 Z"/><path d="M10.5 8 V13.4 M10.5 15 V16.8"/></g></svg>
<span class="t" style="left:297.4px;top:1137.5px;font-size:18.20px;line-height:24px;color:#ffffff;letter-spacing:0.178px;">0</span>
<span class="t" style="left:980.0px;top:1137.5px;font-size:18.20px;line-height:24px;color:#ffffff;letter-spacing:0.287px;">Ln 34, Col 13</span>
<span class="t" style="left:1117.0px;top:1137.5px;font-size:18.20px;line-height:24px;color:#ffffff;letter-spacing:0.273px;">Spaces: 2</span>
<span class="t" style="left:1225.6px;top:1137.5px;font-size:18.20px;line-height:24px;color:#ffffff;letter-spacing:0.527px;">UTF-8</span>
<span class="t" style="left:1305.0px;top:1137.5px;font-size:18.20px;line-height:24px;color:#ffffff;letter-spacing:-0.470px;">LF</span>
<span class="t" style="left:1350.5px;top:1137.5px;font-size:18.20px;line-height:24px;color:#ffffff;letter-spacing:0.433px;">JavaScript</span>
<svg class="r" style="left:1464.0px;top:1138.4px;" width="22.0" height="22.0" viewBox="0 0 22 22"><g fill="none" stroke="#fff" stroke-width="1.5" stroke-linejoin="round"><path d="M8.4 3 H20.4 V12 H17 L14 15 V12"/><circle cx="7.4" cy="10.6" r="3.4"/><path d="M1.6 20.4 Q2 14.6 7.4 14.6 Q12.8 14.6 13.2 20.4"/></g></svg>
<svg class="r" style="left:1510.0px;top:1138.4px;" width="21.0" height="22.0" viewBox="0 0 21 22"><g fill="none" stroke="#fff" stroke-width="1.5" stroke-linejoin="round"><path d="M3 16.4 V15 L4.6 12.6 V8.6 A5.9 5.9 0 0 1 16.4 8.6 V12.6 L18 15 V16.4 Z"/><path d="M8.2 17.4 A2.4 2.4 0 0 0 12.8 17.4"/></g></svg>
</div>
</body></html>
